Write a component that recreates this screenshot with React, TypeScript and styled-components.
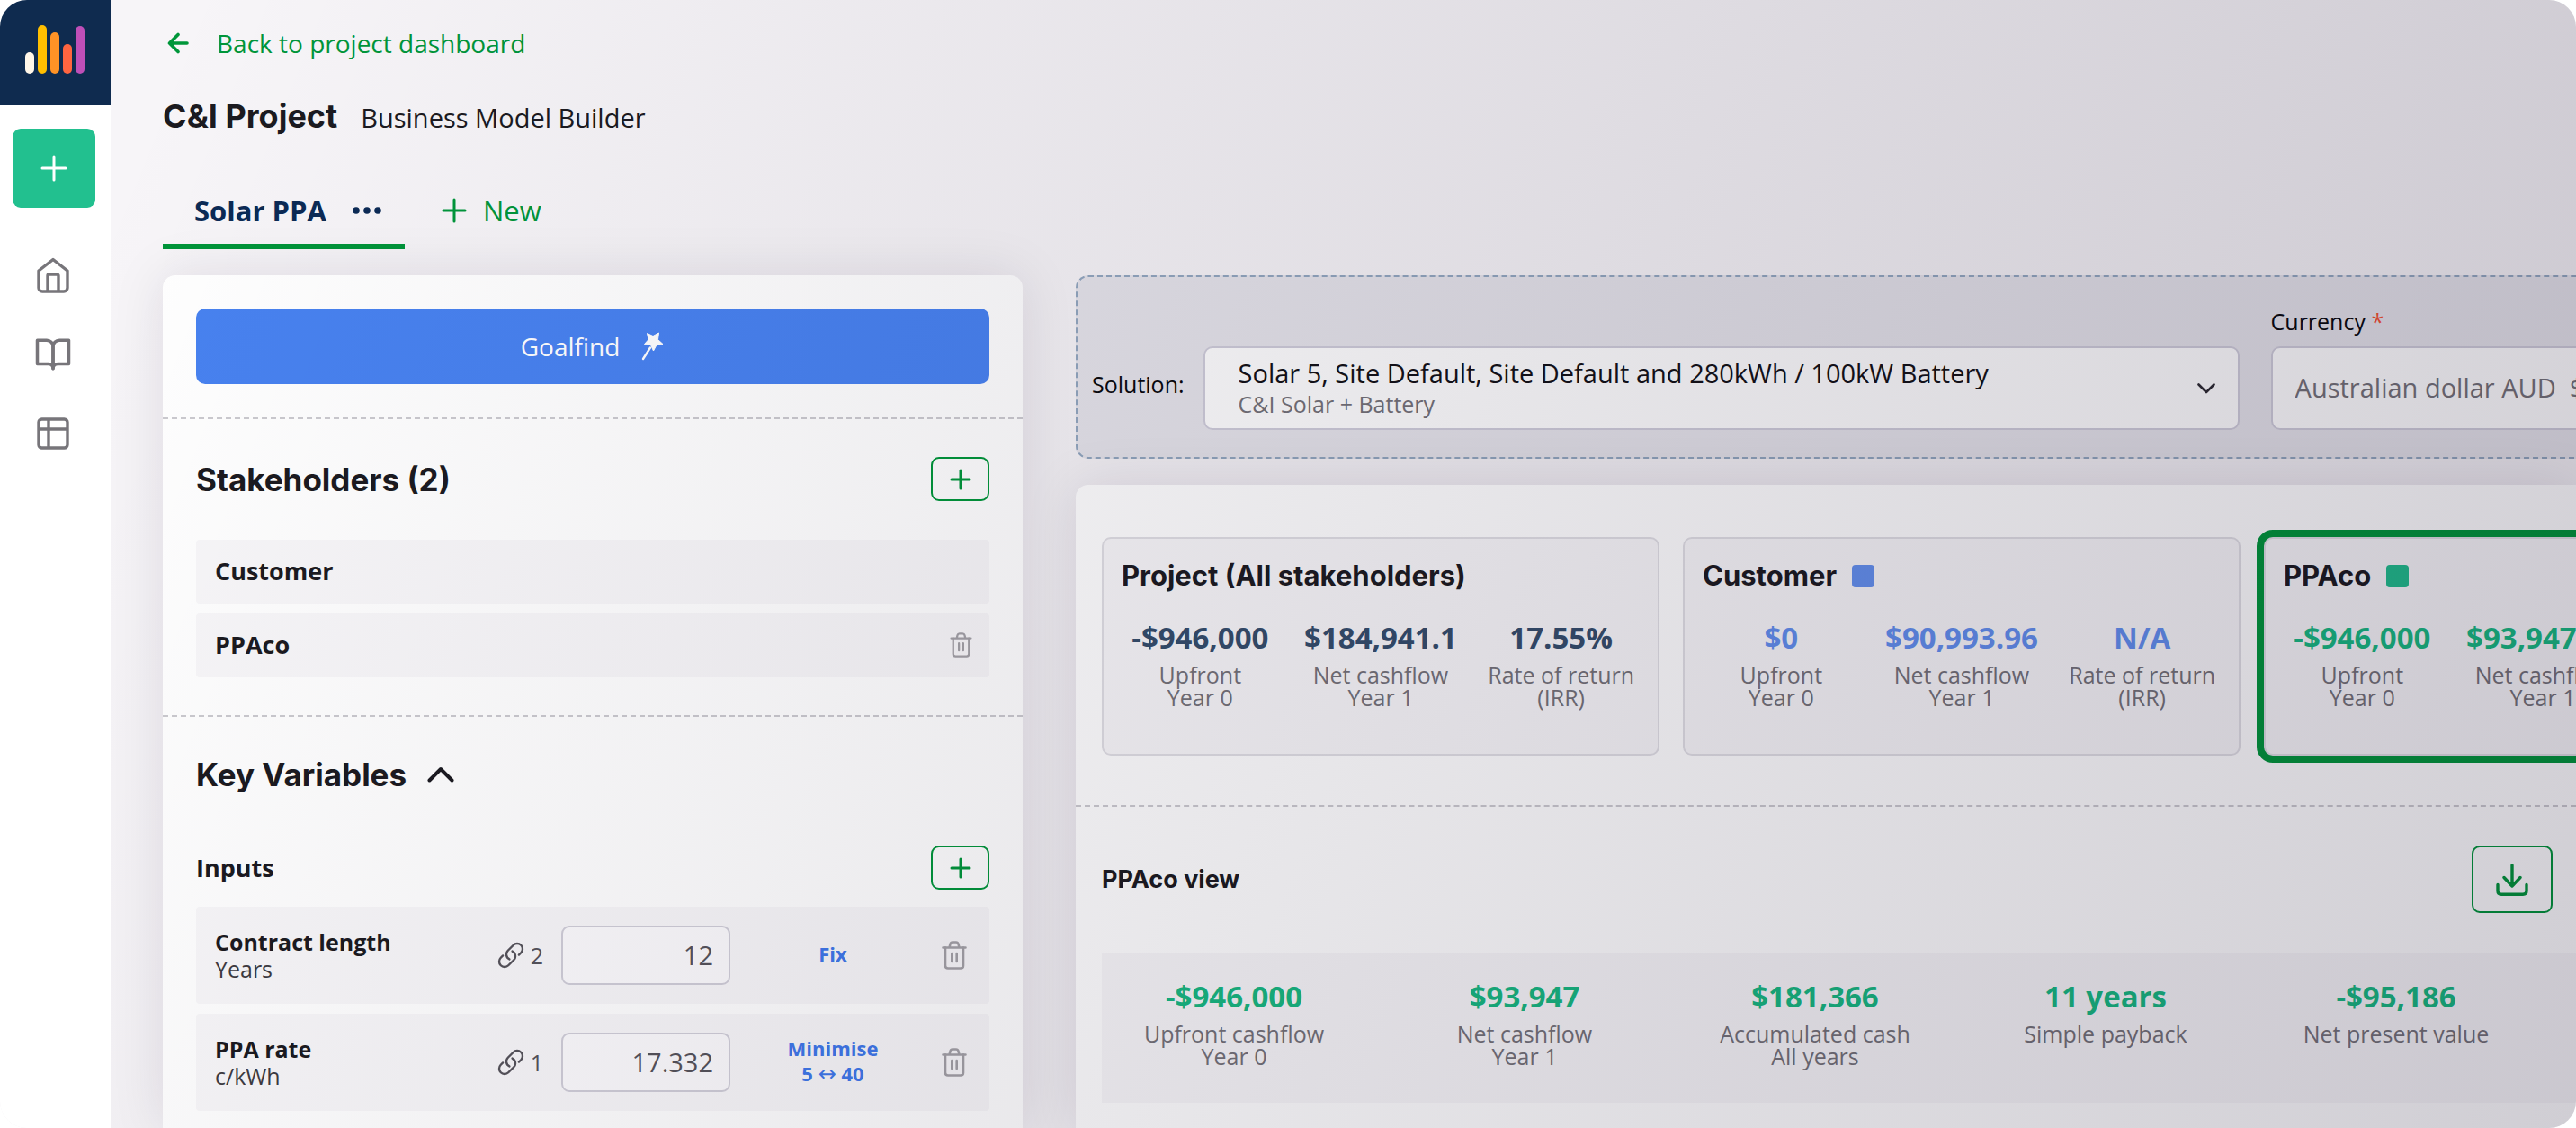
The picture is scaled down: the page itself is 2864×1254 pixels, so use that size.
import React from 'react';
import styled, { createGlobalStyle } from 'styled-components';
import { FiBookOpen } from 'react-icons/fi';

const body = '"Open Sans", "Noto Sans", sans-serif';
const heading = 'Inter, "Open Sans", sans-serif';

const color = {
  ink: '#1b1a20',
  navy: '#0b2a55',
  green: '#00963a',
  teal: '#17b981',
  grey: '#747278',
  midGrey: '#55535a',
  blue: '#3f78ea',
};

const GlobalStyle = createGlobalStyle`
  *, *::before, *::after { box-sizing: border-box; }
  body { margin: 0; background: #fff; }
  h1, h2, h3, p, ul, dl, dd { margin: 0; padding: 0; }
  ul { list-style: none; }
  button, input, select { font: inherit; color: inherit; margin: 0; }
  button, select { cursor: pointer; }
  a { text-decoration: none; }
  svg { display: block; flex: none; }
`;

const Shell = styled.div`
  position: relative;
  display: flex;
  min-height: 100vh;
  overflow: hidden;
  border-radius: 30px;
  background: #f7f5f8;
  color: ${color.ink};
  font: 400 28px/40px ${body};

  &::after {
    content: '';
    position: absolute;
    inset: 0;
    pointer-events: none;
    background: linear-gradient(112deg, rgba(20, 10, 40, 0) 6%, rgba(20, 10, 40, 0.2) 100%);
  }
`;

/* ---------- sidebar ---------- */

const Sidebar = styled.nav`
  z-index: 1;
  flex: 0 0 123px;
  display: flex;
  flex-direction: column;
  background: #fff;
`;

const LogoLink = styled.a`
  display: flex;
  align-items: flex-end;
  gap: 4px;
  height: 117px;
  padding: 0 0 35px 28px;
  background: #0f2b4f;
`;

const LogoBar = styled.span<{ $height: number; $color: string }>`
  width: 10px;
  height: ${(p) => p.$height}px;
  border-radius: 5px;
  background: ${(p) => p.$color};
`;

const CreateButton = styled.button`
  display: grid;
  place-items: center;
  width: 92px;
  height: 88px;
  margin: 26px 0 0 14px;
  padding: 0;
  border: 0;
  border-radius: 9px;
  background: #22c08f;
  color: #fff;
`;

const SideLinks = styled.div`
  display: flex;
  flex-direction: column;
  align-items: center;
  gap: 44px;
  width: 118px;
  margin-top: 53px;
  color: #77757a;

  a { display: grid; place-items: center; width: 44px; height: 44px; color: inherit; }
`;

/* ---------- page header ---------- */

const Main = styled.main`
  flex: 1;
  min-width: 0;
  display: flex;
  flex-direction: column;
  padding: 28px 0 0 58px;
`;

const BackLink = styled.a`
  display: flex;
  align-items: center;
  align-self: flex-start;
  gap: 31px;
  padding-left: 5px;
  color: ${color.green};
`;

const TitleRow = styled.header`
  display: flex;
  align-items: baseline;
  gap: 26px;
  margin-top: 39px;

  h1 { font: 700 36px/44px ${heading}; }
  p { font-size: 29px; line-height: 44px; }
`;

const Tabs = styled.div`
  display: flex;
  margin-top: 43px;
  font-size: 31px;
`;

const Tab = styled.div`
  display: flex;
  align-items: center;
  gap: 25px;
  height: 81px;
  padding: 0 22px 0 35px;
  border-bottom: 6px solid ${color.green};
  color: ${color.navy};
  font-weight: 700;
`;

const PlainButton = styled.button`
  display: flex;
  align-items: center;
  padding: 0;
  border: 0;
  background: none;
`;

const MenuButton = styled(PlainButton)`
  padding: 8px 4px;
`;

const NewTab = styled(PlainButton)`
  gap: 18px;
  height: 75px;
  padding-left: 41px;
  color: ${color.green};
`;

const Columns = styled.div`
  flex: 1;
  display: grid;
  grid-template-columns: minmax(0, 956fr) minmax(0, 1668fr);
  gap: 59px;
  margin-top: 29px;
`;

/* ---------- left panel ---------- */

const Panel = styled.section`
  border-radius: 14px 14px 0 0;
  background: #fff;
  box-shadow: 0 0 60px rgba(30, 20, 50, 0.1);
`;

const Block = styled.div<{ $top: number; $bottom: number; $divider?: boolean }>`
  padding: ${(p) => p.$top}px 37px ${(p) => p.$bottom}px;
  border-bottom: ${(p) => (p.$divider ? '2px dashed #cbcacf' : '0')};
`;

const GoalfindButton = styled.button`
  display: flex;
  align-items: center;
  justify-content: center;
  gap: 24px;
  width: 100%;
  height: 84px;
  border: 0;
  border-radius: 10px;
  background: #4882f0;
  color: #fff;
`;

const BlockHeader = styled.div`
  display: flex;
  align-items: center;
  justify-content: space-between;

  h2 { font: 700 35px/44px ${heading}; }
  h3 { font: 700 27px/40px ${body}; }
`;

const AddButton = styled.button`
  display: grid;
  place-items: center;
  width: 65px;
  height: 49px;
  padding: 0;
  border: 2px solid ${color.green};
  border-radius: 9px;
  background: none;
  color: ${color.green};
`;

const CollapseTitle = styled(PlainButton)`
  gap: 23px;
  font: 700 35px/44px ${heading};
`;

const Rows = styled.ul<{ $top: number }>`
  display: grid;
  gap: 11px;
  margin-top: ${(p) => p.$top}px;
`;

const StakeholderRow = styled.li`
  display: flex;
  align-items: center;
  justify-content: space-between;
  height: 71px;
  padding: 0 19px 2px 21px;
  border-radius: 4px;
  background: #f8f7f9;
  font-size: 27px;
  font-weight: 700;
`;

const TrashButton = styled(PlainButton)`
  justify-content: center;
  color: #a3a1a6;
`;

const InputsHeader = styled(BlockHeader)`
  margin-top: 57px;
`;

const InputRow = styled.li`
  display: grid;
  grid-template-columns: minmax(0, 1fr) auto 188px 228px 41px;
  align-items: center;
  height: 108px;
  padding: 0 19px 0 21px;
  border-radius: 4px;
  background: #f8f7f9;
`;

const RowLabel = styled.label`
  display: flex;
  flex-direction: column;
  font-size: 25px;
  line-height: 30px;

  strong { font-weight: 700; }
  span { color: #3d3b41; }
`;

const LinkCount = styled.span`
  display: flex;
  align-items: center;
  gap: 6px;
  margin-right: 20px;
  color: ${color.midGrey};
  font-size: 25px;
`;

const NumberBox = styled.input`
  width: 100%;
  height: 66px;
  padding: 0 17px 2px;
  border: 2px solid #d0ced8;
  border-radius: 9px;
  background: #fcfbfd;
  color: ${color.midGrey};
  font-size: 29px;
  text-align: right;
`;

const ModeButton = styled(PlainButton)`
  flex-direction: column;
  justify-self: center;
  padding-bottom: 4px;
  color: ${color.blue};
  font-size: 22px;
  line-height: 28px;
  font-weight: 700;
`;

const RangeArrow = styled.span`
  font: 400 24px/28px "DejaVu Sans", sans-serif;
`;

/* ---------- right side ---------- */

const Workspace = styled.div`
  display: flex;
  flex-direction: column;
  gap: 29px;
`;

const Toolbar = styled.div`
  display: flex;
  align-items: flex-end;
  gap: 35px;
  height: 204px;
  padding: 0 0 30px 16px;
  border: 2px dashed #93a8c0;
  border-right: 0;
  border-radius: 14px 0 0 14px;
  background: #e6e5eb;
  color: #08080c;
  font-size: 25px;
`;

const SolutionField = styled.div`
  display: flex;
  align-items: center;
  gap: 21px;

  label { padding-bottom: 10px; }
`;

const SelectBox = styled.div`
  display: grid;
  grid-template-columns: minmax(0, 1fr) 20px;
  align-items: center;
  width: 1152px;
  height: 93px;
  padding: 0 25px 0 37px;
  border: 2px solid #cfcdda;
  border-radius: 10px;
  background: #fff;
  color: #2c2a31;
`;

const SelectText = styled.div`
  display: flex;
  flex-direction: column;
  padding-bottom: 4px;

  span { color: ${color.grey}; font-size: 25px; line-height: 32px; }
`;

const BareSelect = styled.select`
  appearance: none;
  height: 38px;
  padding: 0;
  border: 0;
  background: none;
  color: #121116;
  font-size: 29px;
`;

const CurrencyField = styled.div`
  flex: 1 0 420px;
  display: flex;
  flex-direction: column;
  gap: 11px;

  label { line-height: 34px; font-size: 25px; }
  label span { color: #f4512f; }
`;

const CurrencySelect = styled.select`
  appearance: none;
  height: 93px;
  padding: 0 25px 2px;
  border: 2px solid #cfcdda;
  border-radius: 10px;
  background: #fff;
  color: ${color.grey};
  font-size: 29px;
`;

const Results = styled.section`
  flex: 1;
  border-radius: 14px 0 0 0;
  background: #fff;
  box-shadow: 0 0 60px rgba(30, 20, 50, 0.1);
`;

const CardStrip = styled.div`
  display: flex;
  gap: 26px;
  padding: 58px 0 55px 29px;
  border-bottom: 2px dashed #cbcacf;
`;

const Card = styled.article<{ $active?: boolean }>`
  flex: 0 0 620px;
  height: 243px;
  padding: 21px 7px;
  border: 2px solid #e0dfe4;
  border-radius: 10px;
  outline: ${(p) => (p.$active ? '8px solid #00963a' : 'none')};
  background: #f8f7f9;

  h3 {
    display: flex;
    align-items: center;
    gap: 17px;
    padding-left: 13px;
    font: 700 31px/40px ${heading};
  }
`;

const Swatch = styled.span<{ $color: string }>`
  width: 25px;
  height: 25px;
  border-radius: 4px;
  background: ${(p) => p.$color};
`;

const CardStats = styled.dl`
  display: grid;
  grid-template-columns: repeat(3, minmax(0, 1fr));
  margin-top: 29px;
`;

const Stat = styled.div<{ $color: string }>`
  display: flex;
  flex-direction: column-reverse;
  justify-content: flex-end;
  gap: 9px;
  text-align: center;

  dt { color: ${color.grey}; font-size: 25px; line-height: 25px; white-space: pre-line; }
  dd {
    align-self: center;
    color: ${(p) => p.$color};
    font-size: 33px;
    font-weight: 700;
    line-height: 40px;
    white-space: nowrap;
  }
`;

const ViewHeader = styled.div`
  display: flex;
  align-items: center;
  justify-content: space-between;
  padding: 43px 26px 44px 29px;

  h3 { font: 700 27px/40px ${heading}; }
`;

const DownloadButton = styled(AddButton)`
  width: 90px;
  height: 75px;
`;

const Metrics = styled.dl`
  display: grid;
  grid-template-columns: repeat(5, 294px);
  gap: 29px;
  margin-left: 29px;
  padding: 29px 0 39px;
  background: #f8f7f9;
`;

/* ---------- icons ---------- */

const Plus = ({ size, stroke }: { size: number; stroke: number }) => (
  <svg width={size} height={size} viewBox={`0 0 ${size} ${size}`} stroke="currentColor" strokeWidth={stroke} strokeLinecap="round">
    <path d={`M${size / 2} 2V${size - 2}M2 ${size / 2}H${size - 2}`} />
  </svg>
);

const ArrowLeft = () => (
  <svg width="24" height="24" viewBox="0 0 24 24" fill="none" stroke="currentColor" strokeWidth="3.6" strokeLinecap="round" strokeLinejoin="round">
    <path d="M22 12H2.5M12 2.5L2.5 12L12 21.5" />
  </svg>
);

const Dots = () => (
  <svg width="32" height="8" viewBox="0 0 32 8" fill="currentColor">
    <circle cx="4" cy="4" r="3.8" />
    <circle cx="16" cy="4" r="3.8" />
    <circle cx="28" cy="4" r="3.8" />
  </svg>
);

const Home = () => (
  <svg width="38" height="40" viewBox="0 0 38 40" fill="none" stroke="currentColor" strokeWidth="3.4" strokeLinejoin="round">
    <path d="M3 15L19 2.5L35 15V34a4 4 0 0 1-4 4H7a4 4 0 0 1-4-4Z" />
    <path d="M13 38V20.5a1.5 1.5 0 0 1 1.5-1.5H23.5a1.5 1.5 0 0 1 1.5 1.5V38" />
  </svg>
);

const TableIcon = () => (
  <svg width="36" height="36" viewBox="0 0 36 36" fill="none" stroke="currentColor" strokeWidth="3.4">
    <rect x="2" y="2" width="32" height="32" rx="3.5" />
    <path d="M13 2V34M2 13H34" />
  </svg>
);

const Wand = () => (
  <svg width="26" height="32" viewBox="0 0 26 32" fill="currentColor">
    <path d="M6.5 1.5L13 4.5L19.5 1L18.5 8.5L24 13.5L17 14.5L13.5 21L10.5 14.5L3.5 13.5L8 8.5Z" stroke="currentColor" strokeWidth="1" strokeLinejoin="round" />
    <path d="M10 17.5L2 30" stroke="currentColor" strokeWidth="2.4" strokeLinecap="round" />
  </svg>
);

const Trash = ({ width, height }: { width: number; height: number }) => (
  <svg width={width} height={height} viewBox="0 0 28 32" fill="none" stroke="currentColor" strokeWidth="2.6" strokeLinecap="round" strokeLinejoin="round">
    <path d="M1.5 7.5H26.5M8.5 7.5L9.5 3.5Q10 1.5 12 1.5H16Q18 1.5 18.5 3.5L19.5 7.5" />
    <path d="M4 7.5V27.5Q4 30.5 7 30.5H21Q24 30.5 24 27.5V7.5M11.3 14V23M16.7 14V23" />
  </svg>
);

const LinkIcon = () => (
  <svg width="32" height="32" viewBox="0 0 24 24" fill="none" stroke="currentColor" strokeWidth="1.8" strokeLinecap="round" strokeLinejoin="round">
    <path d="M13.19 8.688a4.5 4.5 0 0 1 1.242 7.244l-4.5 4.5a4.5 4.5 0 0 1-6.364-6.364l1.757-1.757m13.35-.622 1.757-1.757a4.5 4.5 0 0 0-6.364-6.364l-4.5 4.5a4.5 4.5 0 0 0 1.242 7.244" />
  </svg>
);

const ChevronUp = () => (
  <svg width="30" height="18" viewBox="0 0 30 18" fill="none" stroke="currentColor" strokeWidth="4" strokeLinecap="round" strokeLinejoin="round">
    <path d="M2.5 15.5L15 3L27.5 15.5" />
  </svg>
);

const ChevronDown = () => (
  <svg width="20" height="12" viewBox="0 0 20 12" fill="none" stroke="currentColor" strokeWidth="2.6" strokeLinecap="round" strokeLinejoin="round">
    <path d="M1.5 1.5L10 10L18.5 1.5" />
  </svg>
);

const Download = () => (
  <svg width="36" height="36" viewBox="0 0 36 36" fill="none" stroke="currentColor" strokeWidth="3.4" strokeLinecap="round" strokeLinejoin="round">
    <path d="M18 1.7V24M9 15.5L18 25L27 15.5M2 23.5V30.5Q2 34.2 6 34.2H30Q34 34.2 34 30.5V23.5" />
  </svg>
);

/* ---------- data ---------- */

const bars = [
  { height: 24, color: '#fff6e8' },
  { height: 54, color: '#ffbf00' },
  { height: 46, color: '#ff9326' },
  { height: 33, color: '#ff6540' },
  { height: 53, color: '#bf4fb8' },
];

const inputs = [
  { id: 'contract-length', name: 'Contract length', unit: 'Years', links: 2, value: '12', mode: 'Fix' },
  { id: 'ppa-rate', name: 'PPA rate', unit: 'c/kWh', links: 1, value: '17.332', mode: 'Minimise', range: [5, 40] },
];

const statLabels = ['Upfront\nYear 0', 'Net cashflow\nYear 1', 'Rate of return\n(IRR)'];

const cards = [
  { title: 'Project (All stakeholders)', tint: '#344d6b', values: ['-$946,000', '$184,941.1', '17.55%'] },
  { title: 'Customer', swatch: '#6491ee', tint: '#628fee', values: ['$0', '$90,993.96', 'N/A'] },
  { title: 'PPAco', swatch: '#20bd8c', tint: color.teal, values: ['-$946,000', '$93,947.00'], active: true },
];

const metrics = [
  ['-$946,000', 'Upfront cashflow\nYear 0'],
  ['$93,947', 'Net cashflow\nYear 1'],
  ['$181,366', 'Accumulated cash\nAll years'],
  ['11 years', 'Simple payback'],
  ['-$95,186', 'Net present value'],
];

export default function App() {
  return (
    <>
      <GlobalStyle />
      <Shell>
        <Sidebar>
          <LogoLink href="#" aria-label="Home page">
            {bars.map((b) => (
              <LogoBar key={b.color} $height={b.height} $color={b.color} />
            ))}
          </LogoLink>
          <CreateButton aria-label="Create">
            <Plus size={30} stroke={3} />
          </CreateButton>
          <SideLinks>
            <a href="#home" aria-label="Home"><Home /></a>
            <a href="#library" aria-label="Library"><FiBookOpen size={42} strokeWidth={2} /></a>
            <a href="#tables" aria-label="Tables"><TableIcon /></a>
          </SideLinks>
        </Sidebar>

        <Main>
          <BackLink href="#dashboard">
            <ArrowLeft />
            Back to project dashboard
          </BackLink>
          <TitleRow>
            <h1>C&amp;I Project</h1>
            <p>Business Model Builder</p>
          </TitleRow>
          <Tabs>
            <Tab>
              Solar PPA
              <MenuButton aria-label="Tab options"><Dots /></MenuButton>
            </Tab>
            <NewTab>
              <Plus size={28} stroke={3} />
              New
            </NewTab>
          </Tabs>

          <Columns>
            <Panel>
              <Block $top={37} $bottom={37} $divider>
                <GoalfindButton>
                  Goalfind
                  <Wand />
                </GoalfindButton>
              </Block>

              <Block $top={42} $bottom={42} $divider>
                <BlockHeader>
                  <h2>Stakeholders (2)</h2>
                  <AddButton aria-label="Add stakeholder"><Plus size={24} stroke={3} /></AddButton>
                </BlockHeader>
                <Rows $top={43}>
                  <StakeholderRow>Customer</StakeholderRow>
                  <StakeholderRow>
                    PPAco
                    <TrashButton aria-label="Remove PPAco"><Trash width={25} height={28} /></TrashButton>
                  </StakeholderRow>
                </Rows>
              </Block>

              <Block $top={42} $bottom={19}>
                <h2>
                  <CollapseTitle aria-expanded="true">
                    Key Variables
                    <ChevronUp />
                  </CollapseTitle>
                </h2>
                <InputsHeader>
                  <h3>Inputs</h3>
                  <AddButton aria-label="Add input"><Plus size={24} stroke={3} /></AddButton>
                </InputsHeader>
                <Rows $top={19}>
                  {inputs.map((row) => (
                    <InputRow key={row.id}>
                      <RowLabel htmlFor={row.id}>
                        <strong>{row.name}</strong>
                        <span>{row.unit}</span>
                      </RowLabel>
                      <LinkCount><LinkIcon />{row.links}</LinkCount>
                      <NumberBox id={row.id} defaultValue={row.value} inputMode="decimal" />
                      <ModeButton>
                        <span>{row.mode}</span>
                        {row.range && (
                          <span>
                            {row.range[0]} <RangeArrow>↔</RangeArrow> {row.range[1]}
                          </span>
                        )}
                      </ModeButton>
                      <TrashButton aria-label={`Remove ${row.name}`}><Trash width={28} height={32} /></TrashButton>
                    </InputRow>
                  ))}
                </Rows>
              </Block>
            </Panel>

            <Workspace>
              <Toolbar>
                <SolutionField>
                  <label htmlFor="solution">Solution:</label>
                  <SelectBox>
                    <SelectText>
                      <BareSelect id="solution">
                        <option>Solar 5, Site Default, Site Default and 280kWh / 100kW Battery</option>
                      </BareSelect>
                      <span>C&amp;I Solar + Battery</span>
                    </SelectText>
                    <ChevronDown />
                  </SelectBox>
                </SolutionField>
                <CurrencyField>
                  <label htmlFor="currency">Currency <span>*</span></label>
                  <CurrencySelect id="currency">
                    <option>Australian dollar AUD {'\u00a0'}$</option>
                  </CurrencySelect>
                </CurrencyField>
              </Toolbar>

              <Results>
                <CardStrip>
                  {cards.map((card) => (
                    <Card key={card.title} $active={card.active}>
                      <h3>
                        {card.title}
                        {card.swatch && <Swatch $color={card.swatch} />}
                      </h3>
                      <CardStats>
                        {card.values.map((value, i) => (
                          <Stat key={statLabels[i]} $color={card.tint}>
                            <dt>{statLabels[i]}</dt>
                            <dd>{value}</dd>
                          </Stat>
                        ))}
                      </CardStats>
                    </Card>
                  ))}
                </CardStrip>
                <ViewHeader>
                  <h3>PPAco view</h3>
                  <DownloadButton aria-label="Download"><Download /></DownloadButton>
                </ViewHeader>
                <Metrics>
                  {metrics.map(([value, label]) => (
                    <Stat key={label} $color={color.teal}>
                      <dt>{label}</dt>
                      <dd>{value}</dd>
                    </Stat>
                  ))}
                </Metrics>
              </Results>
            </Workspace>
          </Columns>
        </Main>
      </Shell>
    </>
  );
}
